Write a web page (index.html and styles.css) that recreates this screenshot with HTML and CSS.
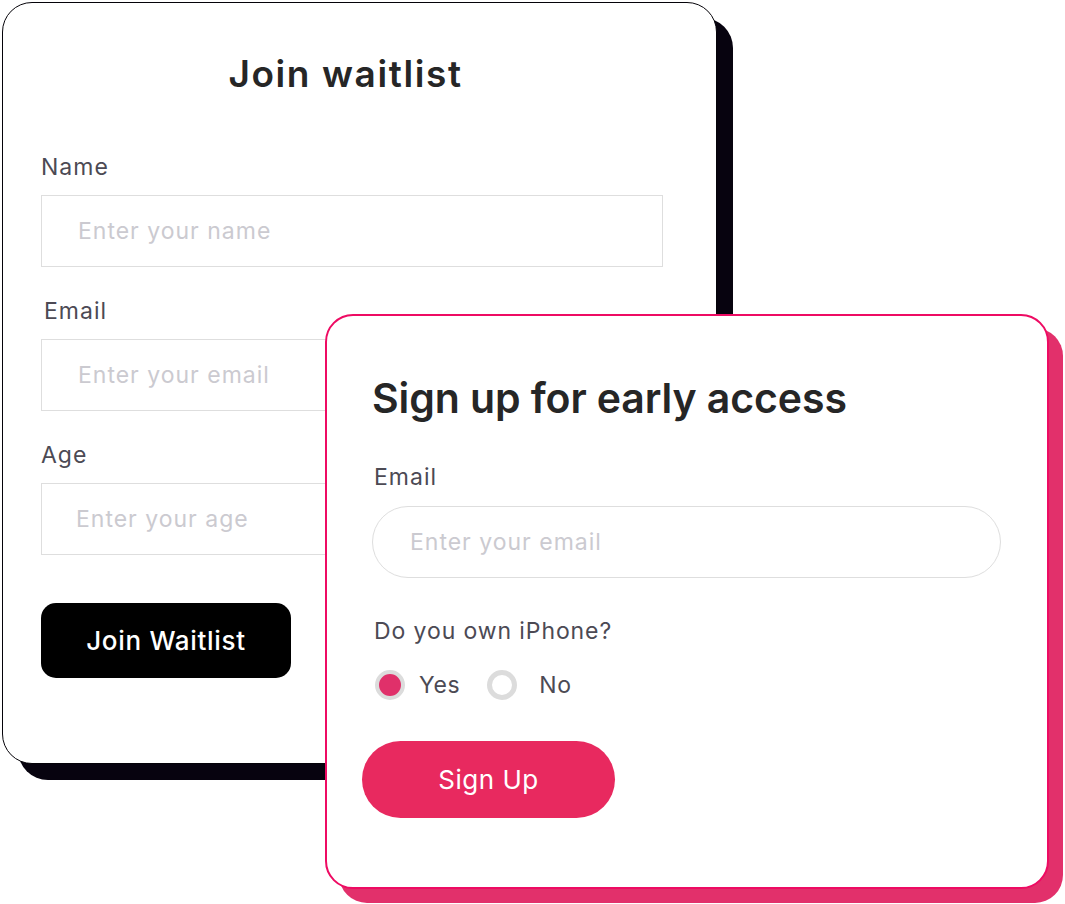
FILE: index.html
```html
<!DOCTYPE html>
<html lang="en">
<head>
  <meta charset="UTF-8">
  <meta name="viewport" content="width=device-width, initial-scale=1.0">
  <title>Waitlist forms</title>
  <link rel="stylesheet" href="styles.css">
</head>
<body>
  <div class="stage">
    <!-- Waitlist card -->
    <form class="card card-waitlist">
      <h1>Join waitlist</h1>

      <div class="field field-first">
        <label for="wl-name">Name</label>
        <input type="text" id="wl-name" placeholder="Enter your name">
      </div>

      <div class="field">
        <label for="wl-email" class="label-shift">Email</label>
        <input type="email" id="wl-email" placeholder="Enter your email">
      </div>

      <div class="field">
        <label for="wl-age">Age</label>
        <input type="text" id="wl-age" class="input-age" placeholder="Enter your age">
      </div>

      <button type="button" class="btn-dark">Join Waitlist</button>
    </form>

    <!-- Early access card -->
    <form class="card card-early">
      <h2>Sign up for early access</h2>

      <div class="field field-first">
        <label for="ea-email">Email</label>
        <input type="email" id="ea-email" class="pill" placeholder="Enter your email">
      </div>

      <p class="question">Do you own iPhone?</p>
      <div class="radios">
        <label class="radio radio-yes">
          <span class="dot checked"></span>
          <span class="radio-text">Yes</span>
        </label>
        <label class="radio radio-no">
          <span class="dot"></span>
          <span class="radio-text">No</span>
        </label>
      </div>

      <button type="button" class="btn-pink">Sign Up</button>
    </form>
  </div>
</body>
</html>
```

FILE: styles.css
```css
/* General Styles */
* {
  margin: 0;
  padding: 0;
  box-sizing: border-box;
}

body {
  font-family: "Inter", "Liberation Sans", sans-serif;
  background-color: #fff;
  color: #262626;
}

.stage {
  position: relative;
  width: 1065px;
  height: 904px;
  padding: 2px 0 0 2px;
}

/* Cards */
.card {
  background-color: #fff;
}

.card-waitlist {
  width: 715px;
  height: 762px;
  border: 1.5px solid #050309;
  border-radius: 30px;
  box-shadow: 16px 16px 0 #07030f;
  padding: 49px 54px 0 38px;
}

.card-waitlist h1 {
  font-size: 37px;
  font-weight: 600;
  line-height: 44px;
  letter-spacing: 1.6px;
  text-align: center;
  padding-right: 12px;
  color: #262626;
}

.field label {
  display: block;
  font-size: 23px;
  line-height: 28px;
  letter-spacing: 1px;
  color: #4c4a54;
}

.field input {
  display: block;
  width: 622px;
  height: 72px;
  margin-top: 14px;
  padding-left: 36px;
  border: 1.5px solid #dedede;
  font-family: inherit;
  font-size: 23px;
  letter-spacing: 1px;
  color: #262626;
  outline: none;
}

.field input::placeholder {
  color: #cbcad0;
}

.card-waitlist .field {
  margin-top: 30px;
}

.card-waitlist .field-first {
  margin-top: 57px;
}

.label-shift {
  padding-left: 3px;
}

.field .input-age {
  padding-left: 34px;
}

.btn-dark {
  display: block;
  width: 250px;
  height: 75px;
  margin-top: 48px;
  background-color: #000;
  color: #fff;
  border: none;
  border-radius: 15px;
  font-family: inherit;
  font-size: 26px;
  font-weight: 500;
  letter-spacing: 0.7px;
  cursor: pointer;
}

/* Early access card */
.card-early {
  position: absolute;
  left: 325px;
  top: 314px;
  width: 724px;
  height: 575px;
  border: 2px solid #ee0b63;
  border-radius: 28px;
  box-shadow: 14px 14px 0 #e2306b;
  padding: 57px 45px 0 45px;
}

.card-early h2 {
  font-size: 41px;
  font-weight: 600;
  line-height: 50px;
  letter-spacing: -0.1px;
  color: #262626;
}

.card-early .field-first {
  margin-top: 40px;
}

.card-early label {
  padding-left: 2px;
}

.field input.pill {
  width: 629px;
  margin-top: 15px;
  border-radius: 36px;
  padding-left: 37px;
}

.question {
  margin-top: 39px;
  padding-left: 2px;
  font-size: 23px;
  line-height: 28px;
  letter-spacing: 0.9px;
  color: #4c4a54;
}

.radios {
  display: flex;
  align-items: center;
  gap: 25px;
  margin-top: 25px;
  padding-left: 1px;
}

.radio {
  display: flex;
  align-items: center;
  font-size: 23px;
  line-height: 30px;
  letter-spacing: 0.6px;
  color: #4c4a54;
}

.dot {
  width: 30px;
  height: 30px;
  border-radius: 50%;
  border: 5px solid #dcdcdc;
  background-color: #fff;
}

.dot.checked {
  background-color: #e0306a;
  border-width: 4.5px;
}

.radio-yes .radio-text {
  margin-left: 14px;
}

.radio-no .radio-text {
  margin-left: 22px;
}

.btn-pink {
  display: block;
  width: 253px;
  height: 77px;
  margin-top: 41px;
  margin-left: -10px;
  background-color: #e8295f;
  color: #fff;
  border: none;
  border-radius: 40px;
  font-family: inherit;
  font-size: 26px;
  font-weight: 400;
  letter-spacing: 0.5px;
  cursor: pointer;
}
```
